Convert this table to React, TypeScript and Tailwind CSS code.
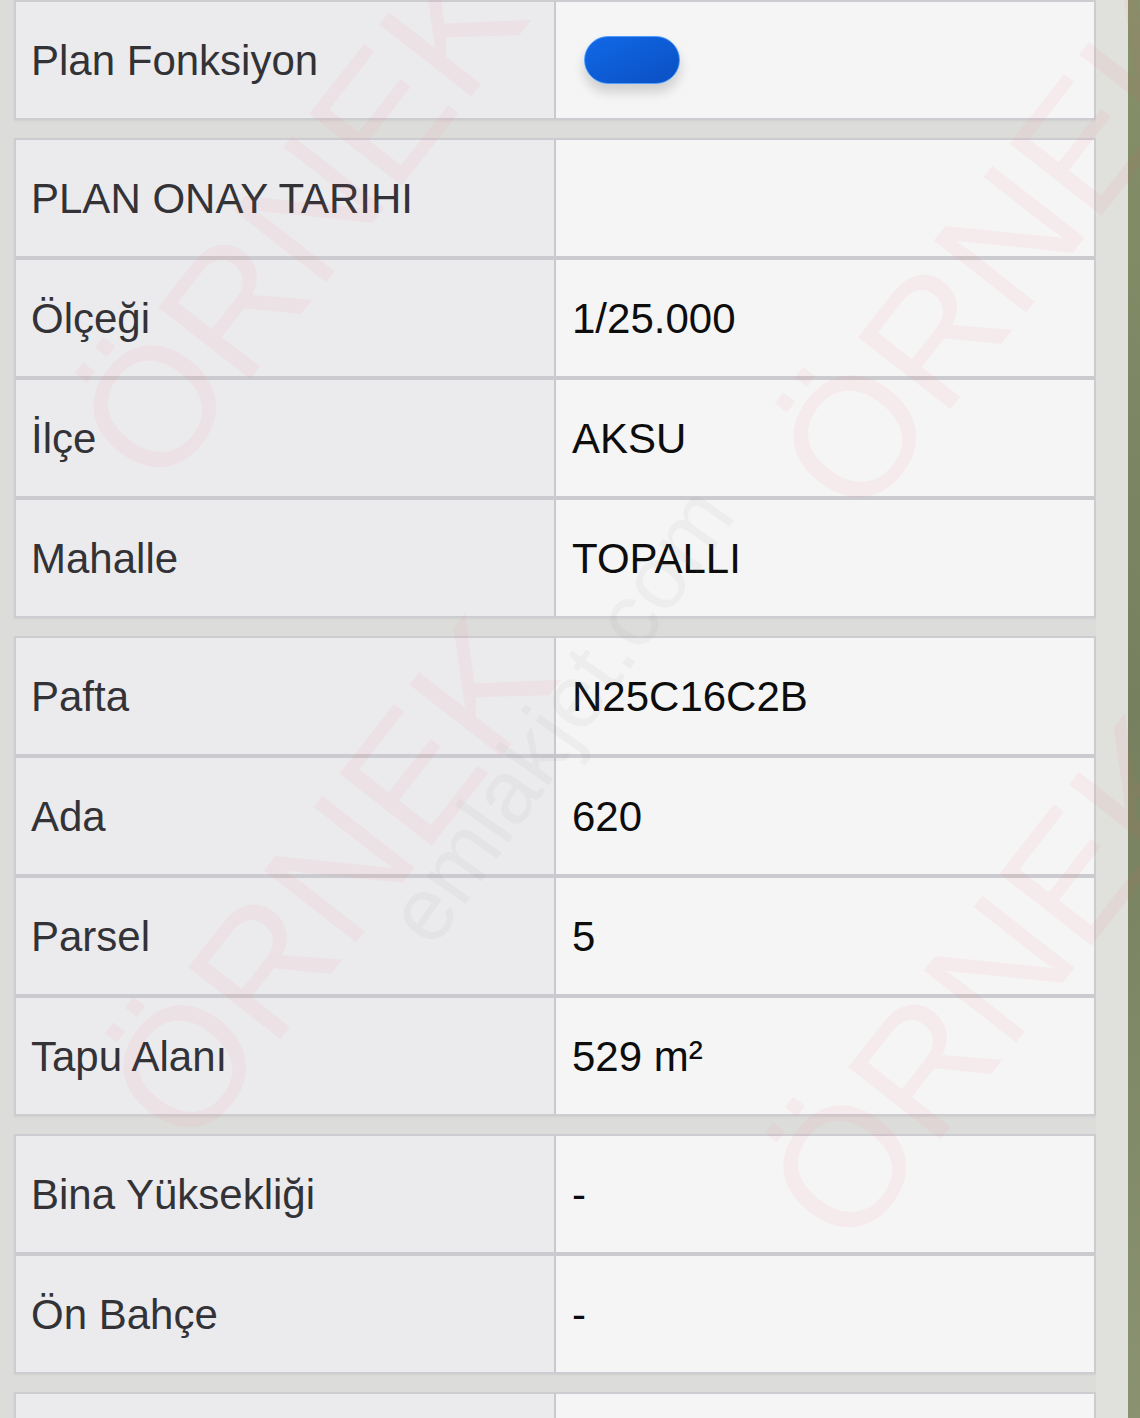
import React from 'react';

type Row = { label: string; value?: string; toggle?: boolean };

const groups: Row[][] = [
  [{ label: 'Plan Fonksiyon', toggle: true }],
  [
    { label: 'PLAN ONAY TARIHI', value: '' },
    { label: 'Ölçeği', value: '1/25.000' },
    { label: 'İlçe', value: 'AKSU' },
    { label: 'Mahalle', value: 'TOPALLI' },
  ],
  [
    { label: 'Pafta', value: 'N25C16C2B' },
    { label: 'Ada', value: '620' },
    { label: 'Parsel', value: '5' },
    { label: 'Tapu Alanı', value: '529 m²' },
  ],
  [
    { label: 'Bina Yüksekliği', value: '-' },
    { label: 'Ön Bahçe', value: '-' },
  ],
  [{ label: '', value: '' }],
];

const Toggle = () => (
  <div className="ml-[12px] h-[48px] w-[96px] rounded-full border border-[#4f9dff] bg-linear-to-br from-[#1268e8] to-[#0a50c2] shadow-[0_8px_12px_rgba(0,0,0,0.16)]" />
);

const App = () => {
  return (
    <div className="relative flex h-[1418px] w-full overflow-hidden bg-[#e2e2e2] font-['Liberation_Sans',Arial,sans-serif]">
      <div className="flex w-[1096px] flex-col gap-[18px] bg-[#dcdddb] pl-[14px]">
        {groups.map((rows, gi) => (
          <div
            key={gi}
            className="flex flex-col divide-y-4 divide-[#cbcbcf] border-2 border-[#cdcdd1] shadow-[0_1px_2px_rgba(0,0,0,0.06)]"
          >
            {rows.map((row, ri) => (
              <div key={ri} className="flex h-[116px] box-content">
                <div className="flex w-[540px] items-center border-r-2 border-[#c9c9cd] bg-[#ebebee] pl-[15px] text-[42px] text-[#333337]">
                  {row.label}
                </div>
                <div className="flex flex-1 items-center bg-[#f5f5f5] pl-[16px] text-[42px] text-[#0d0d0d]">
                  {row.toggle ? <Toggle /> : row.value}
                </div>
              </div>
            ))}
          </div>
        ))}
      </div>
      <div className="w-[32px] bg-[#e0e1dc]" />
      <div className="w-[12px] bg-linear-to-b from-[#86906a] via-[#77805e] to-[#8a9270]" />

      {/* watermark overlay */}
      <div className="pointer-events-none absolute inset-0 select-none">
        <div className="absolute left-[300px] top-[220px] -translate-x-1/2 -translate-y-1/2 -rotate-[52deg] text-[170px] leading-none text-[#ff4d66]/[0.06]">
          ÖRNEK
        </div>
        <div className="absolute left-[330px] top-[880px] -translate-x-1/2 -translate-y-1/2 -rotate-[52deg] text-[170px] leading-none text-[#ff4d66]/[0.06]">
          ÖRNEK
        </div>
        <div className="absolute left-[1000px] top-[250px] -translate-x-1/2 -translate-y-1/2 -rotate-[52deg] text-[170px] leading-none text-[#ff4d66]/[0.06]">
          ÖRNEK
        </div>
        <div className="absolute left-[990px] top-[980px] -translate-x-1/2 -translate-y-1/2 -rotate-[52deg] text-[170px] leading-none text-[#ff4d66]/[0.06]">
          ÖRNEK
        </div>
        <div className="absolute left-[560px] top-[715px] -translate-x-1/2 -translate-y-1/2 -rotate-[55deg] text-[90px] leading-none text-[#8a8a8a]/[0.07]">
          emlakjet.com
        </div>
      </div>
    </div>
  );
};

export default App;
